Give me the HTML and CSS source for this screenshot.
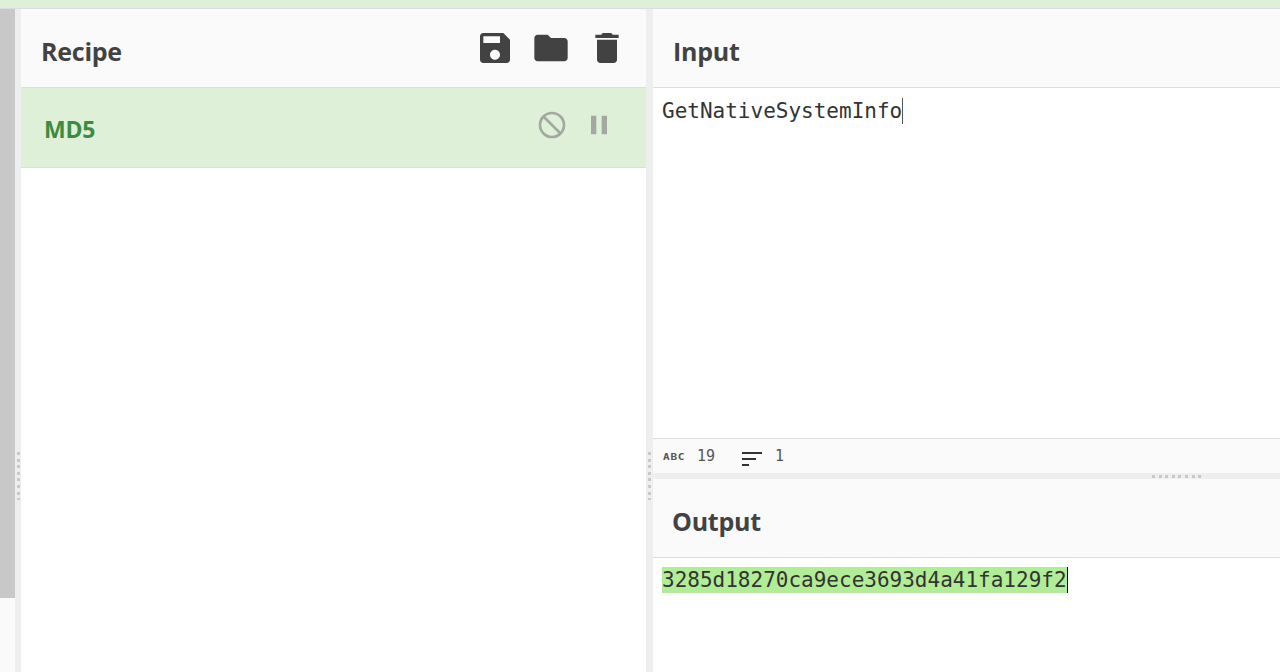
FILE: index.html
```html
<!DOCTYPE html>
<html lang="en">
<head>
<meta charset="utf-8">
<title>CyberChef</title>
<link rel="stylesheet" href="styles.css">
</head>
<body>
<div class="top-band"></div>
<div class="workspace">
  <div class="ops-column"><div class="ops-thumb"></div></div>
  <div class="gutter-v"><span class="dots-v"></span></div>
  <section class="recipe">
    <header class="pane-head">
      <h2 class="pane-title">Recipe</h2>
      <div class="head-icons">
        <svg class="head-icon" viewBox="0 0 24 24"><path d="M17 3H5c-1.11 0-2 .9-2 2v14c0 1.1.89 2 2 2h14c1.1 0 2-.9 2-2V7l-4-4zm-5 16c-1.66 0-3-1.34-3-3s1.34-3 3-3 3 1.34 3 3-1.34 3-3 3zm3-10H5V5h10v4z"/></svg>
        <svg class="head-icon" viewBox="0 0 24 24"><path d="M10 4H4c-1.1 0-1.99.9-1.99 2L2 18c0 1.1.9 2 2 2h16c1.1 0 2-.9 2-2V8c0-1.1-.9-2-2-2h-8l-2-2z"/></svg>
        <svg class="head-icon" viewBox="0 0 24 24"><path d="M6 19c0 1.1.9 2 2 2h8c1.1 0 2-.9 2-2V7H6v12zM19 4h-3.500l-1-1h-5l-1 1H5v2h14V4z"/></svg>
      </div>
    </header>
    <div class="op-row">
      <span class="op-name">MD5</span>
      <div class="op-icons">
        <svg class="op-icon op-icon-line" viewBox="0 0 24 24"><circle cx="12" cy="12" r="9"/><path d="M5.600 5.600 18.400 18.400"/></svg>
        <svg class="op-icon" viewBox="0 0 24 24"><path d="M6 19h4V5H6v14zm8-14v14h4V5h-4z"/></svg>
      </div>
    </div>
  </section>
  <div class="gutter-v gutter-v-wide"><span class="dots-v"></span></div>
  <section class="io">
    <div class="input-pane">
      <header class="pane-head"><h2 class="pane-title">Input</h2></header>
      <div class="editor"><span class="code caret-thin">GetNativeSystemInfo</span></div>
      <footer class="status">
        <span class="abc">ABC</span><span class="count count-len">19</span>
        <svg class="lines-icon" viewBox="0 0 20 14"><path d="M0 0h20v2H0zM0 6h14v2H0zM0 12h7v2H0z"/></svg><span class="count">1</span>
      </footer>
    </div>
    <div class="gutter-h"><span class="dots-h"></span></div>
    <div class="output-pane">
      <header class="pane-head"><h2 class="pane-title title-output">Output</h2></header>
      <div class="editor editor-output"><span class="code hash">3285d18270ca9ece3693d4a41fa129f2</span></div>
    </div>
  </section>
</div>
</body>
</html>
```
FILE: styles.css
```css
* { box-sizing: border-box; }
html, body { margin: 0; height: 100%; overflow: hidden; background: #fff; }
body { display: flex; flex-direction: column; font-family: "Open Sans", sans-serif; color: #424242; }

.top-band { height: 9px; flex: none; background: #dff0d8; border-bottom: 1px solid #dcdcdc; }
.workspace { flex: 1; display: flex; min-height: 0; }

.ops-column { width: 15px; flex: none; background: #fafafa; }
.ops-thumb { height: 589px; background: #c8c8c8; }

.gutter-v { width: 6px; flex: none; background: #eee; position: relative; }
.gutter-v-wide { width: 7px; }
.dots-v {
  position: absolute; left: 2px; top: 443px; width: 3px; height: 48px;
  background: repeating-linear-gradient(to bottom, #c9c9c9 0 3px, transparent 3px 6.600px);
}
.gutter-h { height: 6px; flex: none; background: #eee; position: relative; }
.dots-h {
  position: absolute; left: 499px; top: 2px; width: 50px; height: 3px;
  background: repeating-linear-gradient(to right, #c9c9c9 0 3px, transparent 3px 6.600px);
}

.recipe { width: 625px; flex: none; display: flex; flex-direction: column; }
.io { flex: 1; display: flex; flex-direction: column; min-width: 0; }
.input-pane { height: 464px; flex: none; display: flex; flex-direction: column; }
.output-pane { flex: 1; display: flex; flex-direction: column; }

.pane-head {
  height: 79px; flex: none; display: flex; align-items: center; justify-content: space-between;
  background: #fafafa; border-bottom: 1px solid #ddd; padding: 6px 19px 0 20px;
}
.pane-title { margin: 0; font-size: 25px; font-weight: 700; line-height: 1; letter-spacing: -.25px; color: #424242; }
.title-output { margin-left: -1px; }
.head-icons { display: flex; gap: 16px; margin-top: -7px; }
.head-icon { width: 40px; height: 40px; fill: #424242; display: block; }

.op-row {
  height: 80px; flex: none; display: flex; align-items: center; justify-content: space-between;
  background: #dff0d8; border-bottom: 1px solid #d3e6ca; padding: 2px 31px 0 23px;
}
.op-name { font-size: 23px; font-weight: 700; letter-spacing: -.2px; color: #3d8b40; }
.op-icons { display: flex; gap: 15px; margin-top: -8px; }
.op-icon { width: 32px; height: 32px; fill: #a3a8a1; display: block; }
.op-icon-line { fill: none; stroke: #a3a8a1; stroke-width: 2; }

.editor { flex: 1; padding: 10px 0 0 9px; background: #fff; }
.editor-output { padding-top: 9px; }
.code { display: inline-block; font-family: "DejaVu Sans Mono", monospace; font-size: 21px; line-height: 26px; color: #333; white-space: pre; }
.caret-thin { border-right: 1px solid #555; line-height: 26px; }
.hash { background: #b1ec96; border-right: 1px solid #111; }

.status {
  height: 35px; flex: none; display: flex; align-items: center;
  background: #fafafa; border-top: 1px solid #ddd; padding-left: 10px;
  font-family: "DejaVu Sans Mono", monospace;
}
.abc { font-size: 11px; font-weight: 700; letter-spacing: .8px; width: 22px; color: #555; margin-top: 3px; transform: scaleY(.85); }
.count { font-size: 15px; color: #555; }
.count-len { margin-left: 12px; }
.lines-icon { width: 20px; height: 14px; fill: #333; margin-left: 27px; margin-right: 13px; margin-top: 5px; }
```
